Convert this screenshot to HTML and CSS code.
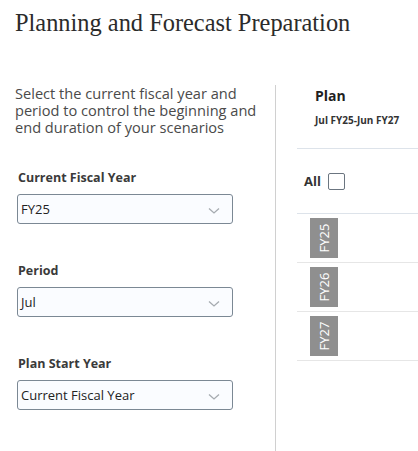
FILE: index.html
```html
<!DOCTYPE html>
<html>
<head>
<meta charset="utf-8">
<link rel="stylesheet" href="styles.css">
</head>
<body>
<h1 class="title">Planning and Forecast Preparation</h1>
<div class="main">
  <div class="left">
    <p class="desc">Select the current fiscal year and period to control the beginning and end duration of your scenarios</p>
    <div class="field field-first">
      <div class="label">Current Fiscal Year</div>
      <div class="select"><span>FY25</span><svg class="chev" width="12" height="8" viewBox="0 0 12 8"><path d="M1 1.5 L6 6 L11 1.5" fill="none" stroke="#a6abb0" stroke-width="1.3"/></svg></div>
    </div>
    <div class="field">
      <div class="label">Period</div>
      <div class="select"><span>Jul</span><svg class="chev" width="12" height="8" viewBox="0 0 12 8"><path d="M1 1.5 L6 6 L11 1.5" fill="none" stroke="#a6abb0" stroke-width="1.3"/></svg></div>
    </div>
    <div class="field">
      <div class="label">Plan Start Year</div>
      <div class="select"><span>Current Fiscal Year</span><svg class="chev" width="12" height="8" viewBox="0 0 12 8"><path d="M1 1.5 L6 6 L11 1.5" fill="none" stroke="#a6abb0" stroke-width="1.3"/></svg></div>
    </div>
  </div>
  <div class="right">
    <div class="plan-head">
      <div class="plan-title">Plan</div>
      <div class="plan-range">Jul FY25-Jun FY27</div>
    </div>
    <div class="all-row">
      <span class="all">All</span><span class="checkbox"></span>
    </div>
    <div class="year-row"><span class="badge"><span>FY25</span></span></div>
    <div class="year-row"><span class="badge"><span>FY26</span></span></div>
    <div class="year-row"><span class="badge"><span>FY27</span></span></div>
  </div>
</div>
</body>
</html>
```
FILE: styles.css
```css
html, body {
  margin: 0;
  padding: 0;
  background: #ffffff;
}
body {
  font-family: "Open Sans", "Noto Sans", sans-serif;
  color: #333333;
  width: 418px;
  height: 451px;
  overflow: hidden;
}
.title {
  font-family: "Liberation Serif", "DejaVu Serif", serif;
  font-weight: normal;
  font-size: 24.4px;
  line-height: 30px;
  color: #2b2b2b;
  margin: 8px 0 0 15px;
}
.main {
  display: flex;
  margin-top: 47px;
}
.left {
  width: 260px;
  padding-left: 15px;
  border-right: 1px solid #d0d0d0;
  height: 366px;
}
.desc {
  margin: 0;
  font-size: 14.6px;
  line-height: 17px;
  color: #4a4a4a;
  width: 255px;
}
.field {
  margin-top: 38px;
  padding-left: 3px;
}
.field-first {
  margin-top: 33px;
}
.label {
  font-size: 12.5px;
  font-weight: 700;
  line-height: 18px;
  color: #3a3a3a;
  margin-bottom: 7px;
}
.select {
  height: 28px;
  border: 1px solid #7b8894;
  border-radius: 3px;
  background: #fafcff;
  display: flex;
  align-items: center;
  justify-content: space-between;
  padding: 0 11px 0 3px;
  box-sizing: content-box;
  margin-left: -1px;
  width: 200px;
  font-size: 13px;
  color: #222222;
}
.chev {
  display: block;
  margin-top: 3px;
  margin-right: 1px;
}
.right {
  flex: 1;
  padding-left: 21px;
}
.plan-head {
  padding: 2px 0 0 18px;
  height: 61px;
  border-bottom: 1px solid #dde3ea;
}
.plan-title {
  font-size: 14px;
  font-weight: 700;
  line-height: 18px;
  color: #1f1f1f;
}
.plan-range {
  font-size: 10px;
  font-weight: 700;
  color: #333333;
  margin-top: 8px;
  line-height: 14px;
}
.all-row {
  display: flex;
  align-items: center;
  height: 64px;
  padding-left: 7px;
  border-bottom: 1px solid #dde3ea;
}
.all {
  font-size: 13px;
  font-weight: 700;
  color: #333333;
  margin-right: 7px;
}
.checkbox {
  width: 15px;
  height: 15px;
  border: 1px solid #6b7580;
  border-radius: 2px;
  background: #ffffff;
}
.year-row {
  border-bottom: 1px solid #e6e6e6;
  padding: 4px 0 0 13px;
  box-sizing: content-box;
  height: 44px;
}
.badge {
  display: flex;
  align-items: center;
  justify-content: center;
  width: 28px;
  height: 40px;
  background: #8f8f8f;
}
.badge span {
  transform: rotate(-90deg);
  color: #ffffff;
  font-size: 13px;
  font-weight: 400;
  white-space: nowrap;
}
```
